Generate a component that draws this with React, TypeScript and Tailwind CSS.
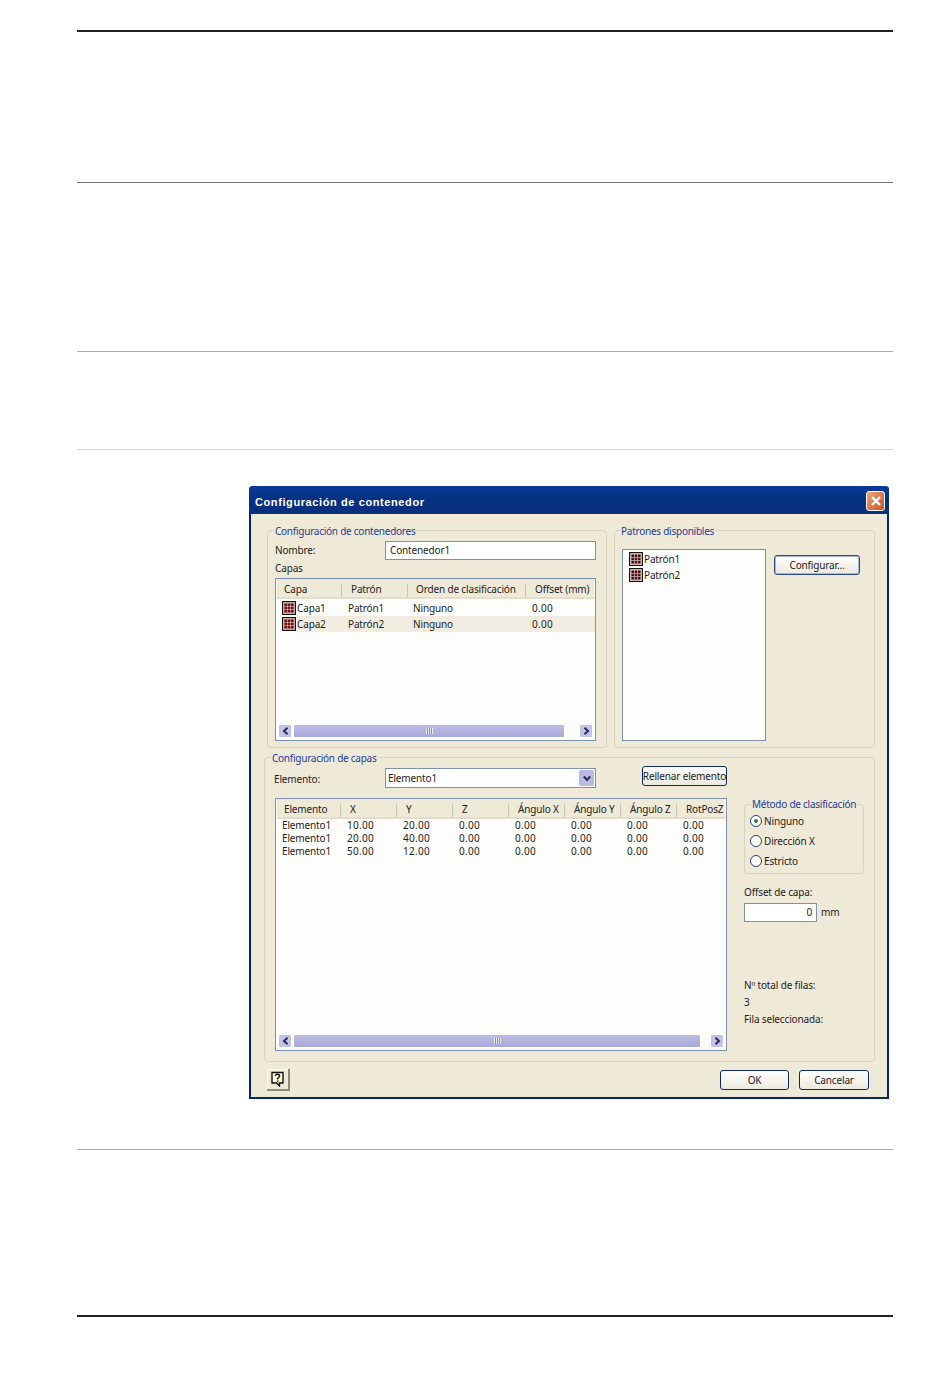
import React from "react";

const font = "font-['Noto_Sans',sans-serif] text-[10px] tracking-[-0.15px] text-[#1c1c1c]";
const num = "tracking-[0.3px]";

function PatternIcon({ fill, dot }: { fill: string; dot: string }) {
  const dots: React.ReactElement[] = [];
  for (const y of [2.5, 5.75, 9]) for (const x of [2.5, 5.75, 9]) dots.push(<rect key={`${x}-${y}`} x={x} y={y} width="2.5" height="2.5" fill={dot} />);
  return (
    <svg width="14" height="14" viewBox="0 0 14 14" className="shrink-0">
      <rect x="0.5" y="0.5" width="13" height="13" fill={fill} stroke="#111" />
      {dots}
    </svg>
  );
}

function Legend({ children, className }: { children: React.ReactNode; className: string }) {
  return <span className={`absolute bg-[#efe9d8] px-px leading-[13px] whitespace-nowrap tracking-[-0.25px] text-[#1f3a93] ${className}`}>{children}</span>;
}

function Chevron({ right }: { right?: boolean }) {
  return (
    <span className="flex h-[14px] w-[14px] shrink-0 items-center justify-center rounded-[2px] border border-white bg-[#c3c3ea]">
      <svg width="7" height="8" viewBox="0 0 7 8">
        <path d={right ? "M1.5 0.8 L5 4 L1.5 7.2" : "M5.5 0.8 L2 4 L5.5 7.2"} fill="none" stroke="#2b2b55" strokeWidth="2" />
      </svg>
    </span>
  );
}

function Scrollbar({ thumb }: { thumb: number }) {
  return (
    <div className="mx-px mb-px flex h-[16px] items-center bg-[#fbfbf8] px-px">
      <Chevron />
      <div className="ml-px flex h-[14px] items-center justify-center rounded-[2px] border border-white bg-gradient-to-b from-[#bcbce6] to-[#a9a9d8]" style={{ width: thumb }}>
        <span className="h-[6px] w-[7px] bg-[repeating-linear-gradient(90deg,#eeeeff_0,#eeeeff_1px,#8686b8_1px,#8686b8_2px)]" />
      </div>
      <span className="flex-1" />
      <Chevron right />
    </div>
  );
}

function HeaderCell({ w, children, last, pad }: { w: number; children: React.ReactNode; last?: boolean; pad: number }) {
  return (
    <div className="relative flex h-full shrink-0 items-center whitespace-nowrap" style={{ width: w, paddingLeft: pad }}>
      {children}
      {!last && <span className="absolute right-0 top-[2px] h-[13px] w-px bg-[#c9c5b2]" />}
    </div>
  );
}

function Radio({ on, label }: { on?: boolean; label: string }) {
  return (
    <div className="flex h-[20px] items-center gap-[2px]">
      <span className="flex h-[12px] w-[12px] items-center justify-center rounded-full border border-[#2c3e66] bg-white">
        {on && <span className="h-[4px] w-[4px] rounded-full bg-[#2b7a3a]" />}
      </span>
      <span>{label}</span>
    </div>
  );
}

const btn = "flex items-center justify-center rounded-[3px] border border-[#0f2a5c] bg-gradient-to-b from-white to-[#ece9dc]";

const layerRows = [
  ["Capa1", "Patrón1", "Ninguno", "0.00"],
  ["Capa2", "Patrón2", "Ninguno", "0.00"],
];
const elemRows = [
  ["Elemento1", "10.00", "20.00", "0.00", "0.00", "0.00", "0.00", "0.00"],
  ["Elemento1", "20.00", "40.00", "0.00", "0.00", "0.00", "0.00", "0.00"],
  ["Elemento1", "50.00", "12.00", "0.00", "0.00", "0.00", "0.00", "0.00"],
];
const elemHead = ["Elemento", "X", "Y", "Z", "Ángulo X", "Ángulo Y", "Ángulo Z", "RotPosZ"];

export default function App() {
  return (
    <div className={`h-[1378px] w-[950px] bg-white pl-[77px] pr-[57px] pt-[30px] ${font}`}>
      <div className="h-[2px] bg-[#222]" />
      <div className="mt-[150px] h-px bg-[#777]" />
      <div className="mt-[168px] h-px bg-[#ababab]" />
      <div className="mt-[97px] h-px bg-[#d4d4d4]" />

      {/* Dialog */}
      <div className="ml-[172px] mt-[36px] h-[613px] w-[640px] rounded-t-[4px] border-x-2 border-b-2 border-[#0a246a] bg-[#efe9d8]">
        <div className="-mx-[2px] flex h-[28px] items-center justify-between rounded-t-[4px] bg-gradient-to-b from-[#0a3a9a] via-[#06307f] to-[#0a2f80] pl-[6px] pr-[4px]">
          <span className="mt-[4px] font-['Liberation_Sans',sans-serif] text-[11px] font-bold tracking-[0.6px] text-white">Configuración de contenedor</span>
          <span className="mt-[2px] flex h-[20px] w-[19px] items-center justify-center rounded-[3px] border border-white bg-gradient-to-br from-[#eda47c] to-[#c6521c]">
            <svg width="12" height="12" viewBox="0 0 12 12">
              <path d="M2 2 L10 10 M10 2 L2 10" stroke="#fff" strokeWidth="2.4" />
            </svg>
          </span>
        </div>

        <div className="ml-[16px] mt-[16px] flex gap-[7px]">
          {/* Contenedores */}
          <div className="relative h-[218px] w-[340px] rounded-[4px] border border-[#d8d4bf] pl-[7px] pr-[10px] pt-[10px]">
            <Legend className="left-[6px] top-[-6px]">Configuración de contenedores</Legend>
            <div className="flex items-center">
              <span className="w-[110px]">Nombre:</span>
              <div className="flex h-[19px] w-[211px] items-center border border-[#7f8fb0] bg-white pl-[4px]">Contenedor1</div>
            </div>
            <div className="flex h-[18px] items-center pb-[2px]">Capas</div>
            <div className="flex h-[163px] w-[321px] flex-col border border-[#7f8fb0] bg-[#fdfdfb]">
              <div className="mx-px flex h-[20px] shrink-0 items-center border-b-2 border-[#e2decb] bg-[#efe9d8] pt-[3px]">
                <HeaderCell w={65} pad={7}>Capa</HeaderCell>
                <HeaderCell w={66} pad={9}>Patrón</HeaderCell>
                <HeaderCell w={118} pad={8}>Orden de clasificación</HeaderCell>
                <HeaderCell w={68} pad={9} last>Offset (mm)</HeaderCell>
              </div>
              <div className="mt-px flex-1">
                {layerRows.map((r, i) => (
                  <div key={r[0]} className="flex h-[16px] items-center pl-[6px]">
                    <PatternIcon fill="#c9a4a4" dot="#6e0f14" />
                    <div className={`ml-px flex h-full flex-1 items-center ${i === 1 ? "bg-[#f1ecdf]" : ""}`}>
                      <span className="w-[51px]">{r[0]}</span>
                      <span className="w-[65px]">{r[1]}</span>
                      <span className="w-[119px]">{r[2]}</span>
                      <span className={num}>{r[3]}</span>
                    </div>
                  </div>
                ))}
              </div>
              <Scrollbar thumb={272} />
            </div>
          </div>

          {/* Patrones */}
          <div className="relative flex h-[218px] w-[261px] items-start rounded-[4px] border border-[#d8d4bf] pl-[7px] pt-[18px]">
            <Legend className="left-[5px] top-[-6px]">Patrones disponibles</Legend>
            <div className="h-[192px] w-[144px] border border-[#7f8fb0] bg-[#fdfdfb] pl-[6px] pt-px">
              {["Patrón1", "Patrón2"].map((p) => (
                <div key={p} className="flex h-[16px] items-center gap-px">
                  <PatternIcon fill="#c9b4b4" dot="#4a1015" />
                  <span>{p}</span>
                </div>
              ))}
            </div>
            <div className={`${btn} ml-[8px] mt-[6px] h-[20px] w-[86px] border-[#2f4a8a] shadow-[inset_0_0_0_1px_#a9b4dc]`}>Configurar...</div>
          </div>
        </div>

        {/* Capas */}
        <div className="relative ml-[13px] mt-[9px] h-[305px] w-[611px] rounded-[4px] border border-[#d8d4bf] pl-[10px] pt-[8px]">
          <Legend className="left-[6px] top-[-6px]">Configuración de capas</Legend>
          <div className="-ml-px flex items-start">
            <span className="w-[111px] pt-[7px] leading-[13px]">Elemento:</span>
            <div className="mt-[2px] flex h-[20px] w-[211px] items-center justify-between border border-[#7f8fb0] bg-white pl-[2px] pr-[1px]">
              <span className="pt-px">Elemento1</span>
              <span className="flex h-[16px] w-[15px] items-center justify-center rounded-[2px] bg-[#b9b9e4]">
                <svg width="8" height="7" viewBox="0 0 8 7">
                  <path d="M0.8 1.5 L4 5 L7.2 1.5" fill="none" stroke="#2b2b55" strokeWidth="2" />
                </svg>
              </span>
            </div>
            <div className={`${btn} ml-[46px] h-[20px] w-[85px] whitespace-nowrap pt-px`}>Rellenar elemento</div>
          </div>

          <div className="mt-[10px] flex">
            <div className="flex h-[253px] w-[452px] flex-col border border-[#7f8fb0] bg-[#fdfdfb]">
              <div className="mx-px flex h-[20px] shrink-0 items-center border-b-2 border-[#e2decb] bg-[#efe9d8] pt-[3px]">
                {elemHead.map((h, i) => (
                  <HeaderCell key={h} w={i === 0 ? 64 : 56} pad={i === 0 ? 7 : 9} last={i === 7}>{h}</HeaderCell>
                ))}
              </div>
              <div className="flex-1">
                {elemRows.map((r, i) => (
                  <div key={i} className="flex h-[13px] items-center pl-[6px]">
                    {r.map((c, j) => (
                      <span key={j} className={`shrink-0 ${j > 0 ? num : ""}`} style={{ width: j === 0 ? 65 : 56 }}>{c}</span>
                    ))}
                  </div>
                ))}
              </div>
              <Scrollbar thumb={408} />
            </div>

            <div className="ml-[17px] w-[120px]">
              <div className="relative mt-[6px] h-[70px] w-[120px] rounded-[4px] border border-[#d8d4bf] pl-[5px] pt-[6px]">
                <Legend className="left-[6px] top-[-7px]">Método de clasificación</Legend>
                <Radio on label="Ninguno" />
                <Radio label="Dirección X" />
                <Radio label="Estricto" />
              </div>
              <div className="mt-[12px] leading-[13px]">Offset de capa:</div>
              <div className="mt-[4px] flex items-center">
                <div className="flex h-[19px] w-[73px] items-center justify-end border border-[#7f8fb0] bg-white pr-[4px]">0</div>
                <span className="ml-[4px]">mm</span>
              </div>
              <div className="mt-[57px] leading-[13px]">Nº total de filas:</div>
              <div className="mt-[4px] leading-[13px]">3</div>
              <div className="mt-[4px] leading-[13px]">Fila seleccionada:</div>
            </div>
          </div>
        </div>

        {/* Footer */}
        <div className="ml-[16px] mt-[7px] flex items-start">
          <div className="flex h-[22px] w-[23px] items-center justify-center border-b-2 border-r-2 border-[#8f8a78] bg-[#efe9d8] shadow-[inset_1px_1px_0_#fff]">
            <svg width="15" height="16" viewBox="0 0 15 16">
              <path d="M2 1.5 H13 V12 H9.5 V15 L6.5 12 H2 Z" fill="#fdfbd8" stroke="#111" strokeWidth="1.4" />
              <path d="M5.5 5 Q5.5 3.2 7.6 3.2 Q9.6 3.2 9.6 5 Q9.6 6 8.2 6.8 L7.6 7.6 V8.6" fill="none" stroke="#111" strokeWidth="1.4" />
              <rect x="6.9" y="9.6" width="1.5" height="1.5" fill="#111" />
            </svg>
          </div>
          <div className={`${btn} ml-[430px] mt-px h-[20px] w-[69px]`}>OK</div>
          <div className={`${btn} ml-[10px] mt-px h-[20px] w-[70px]`}>Cancelar</div>
        </div>
      </div>

      <div className="mt-[50px] h-px bg-[#ababab]" />
      <div className="mt-[165px] h-[2px] bg-[#222]" />
    </div>
  );
}
